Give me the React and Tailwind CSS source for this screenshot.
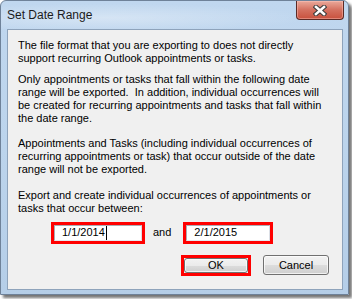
import { useState } from 'react';

const font = { fontFamily: '"Liberation Sans", Arial, sans-serif' };

function CloseButton() {
  return (
    <div className="w-[48px] h-[19px] rounded-b-[4px] border border-t-0 border-[#5b2a25] bg-gradient-to-b from-[#eaa99b] via-[#d4705f] to-[#c8503d] flex items-center justify-center shadow-[inset_0_0_0_1px_rgba(255,200,190,0.45)]">
      <svg width="14" height="11" viewBox="0 0 14 11">
        <path d="M3 2 L11 9 M11 2 L3 9" stroke="#3b3b3b" strokeWidth="4.6" strokeLinecap="square" />
        <path d="M3 2 L11 9 M11 2 L3 9" stroke="#ffffff" strokeWidth="2.6" strokeLinecap="square" />
      </svg>
    </div>
  );
}

function DateField({ value, width, caret }) {
  return (
    <div className={`border-[3px] border-[#ff0000] h-[22px] ${width}`}>
      <div className="h-full bg-white border border-[#abadb3] border-b-[#e3e9ef] border-r-[#dbdfe6] flex items-center pl-[7px] text-[11px] text-black">
        <span>{value}</span>
        {caret && <span className="w-px h-[14px] bg-black ml-px" />}
      </div>
    </div>
  );
}

function Button({ children }) {
  return (
    <div className="h-full rounded-[3px] border border-[#707070] bg-[linear-gradient(to_bottom,#f2f2f2_0%,#ebebeb_50%,#dddddd_50%,#cfcfcf_100%)] shadow-[inset_0_0_0_1px_rgba(255,255,255,0.7)] flex items-center justify-center text-[11px] text-black">
      {children}
    </div>
  );
}

export default function App() {
  const [from] = useState('1/1/2014');
  const [to] = useState('2/1/2015');

  return (
    <div className="w-[352px] h-[299px] bg-white overflow-hidden" style={font}>
      <div className="w-[349px] h-[295px] rounded-tl-[6px] rounded-tr-[6px] border border-[#6f8299] bg-gradient-to-b from-[#c0d7ef] via-[#bcd4ec] to-[#b5cee8] shadow-[3px_3px_3px_rgba(0,0,0,0.55)] flex flex-col">
        <div className="h-[28px] shrink-0 flex items-start justify-between pl-[6px] pr-[4px] bg-[radial-gradient(ellipse_at_30%_60%,rgba(255,255,255,0.35),transparent_60%)]">
          <span className="mt-[5px] text-[12px] text-[#1b1b1b]">Set Date Range</span>
          <CloseButton />
        </div>
        <div className="ml-[6px] mr-[5px] h-[261px] shrink-0 border border-[#8ea3bb] bg-[#f0f0f0] flex flex-col">
          <div className="pl-[10px] pt-[9px] text-[11px] leading-[12.7px] text-black whitespace-nowrap">
            <p>
              The file format that you are exporting to does not directly
              <br />
              support recurring Outlook appointments or tasks.
            </p>
            <p className="mt-[9px]">
              Only appointments or tasks that fall within the following date
              <br />
              range will be exported.&nbsp; In addition, individual occurrences will
              <br />
              be created for recurring appointments and tasks that fall within
              <br />
              the date range.
            </p>
            <p className="mt-[13px]">
              Appointments and Tasks (including individual occurrences of
              <br />
              recurring appointments or task) that occur outside of the date
              <br />
              range will not be exported.
            </p>
            <p className="mt-[14px]">
              Export and create individual occurrences of appointments or
              <br />
              tasks that occur between:
            </p>
          </div>
          <div className="mt-[7px] pl-[43px] flex items-center">
            <DateField value={from} width="w-[94px]" caret />
            <span className="ml-[8px] mr-[12px] text-[11px] text-black">and</span>
            <DateField value={to} width="w-[90px]" />
          </div>
          <div className="mt-[11px] pr-[13px] flex justify-end items-center">
            <div className="w-[70px] h-[21px] border-[3px] border-[#ff0000]">
              <Button>OK</Button>
            </div>
            <div className="ml-[12px] w-[66px] h-[20px]">
              <Button>Cancel</Button>
            </div>
          </div>
        </div>
      </div>
    </div>
  );
}
